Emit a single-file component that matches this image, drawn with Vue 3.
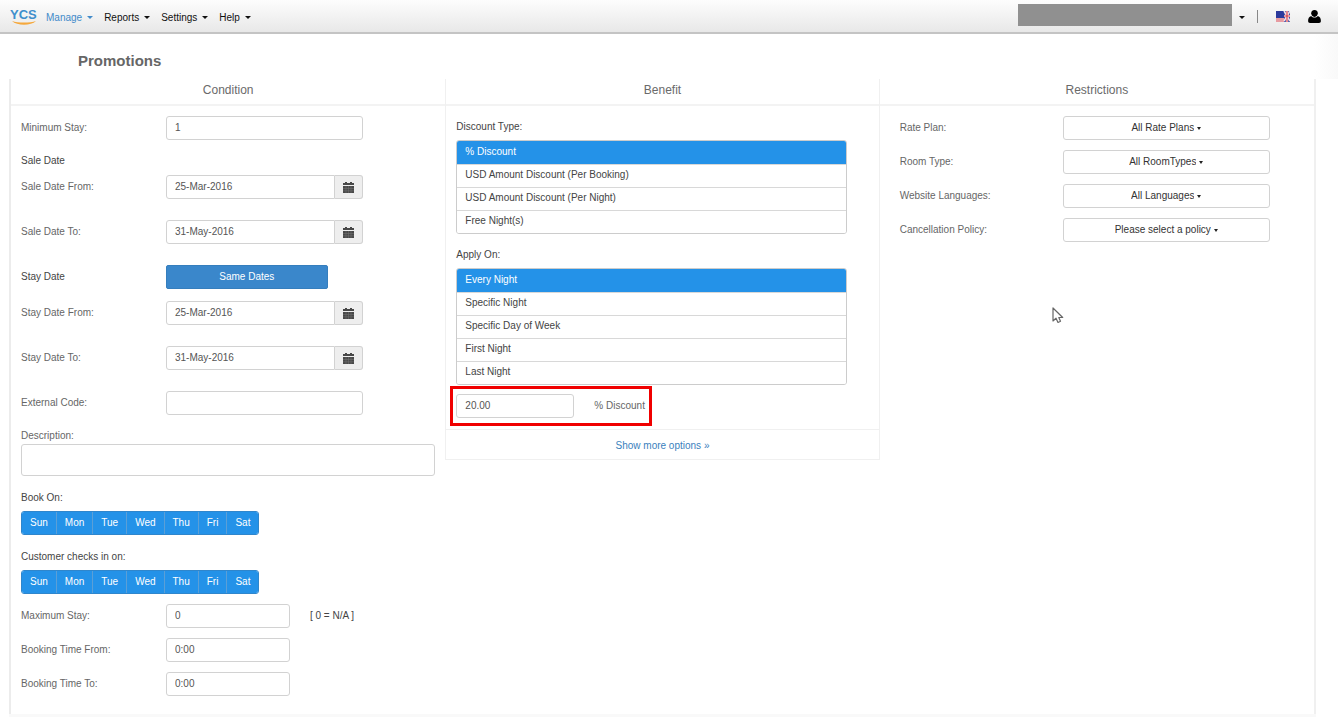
<script setup>
import { ref } from 'vue'

const menus = [
  { name: 'Manage', active: true },
  { name: 'Reports', active: false },
  { name: 'Settings', active: false },
  { name: 'Help', active: false },
]

const days = ['Sun', 'Mon', 'Tue', 'Wed', 'Thu', 'Fri', 'Sat']
const bookOn = ref([...days])
const checkInOn = ref([...days])

function toggle(list, day) {
  const i = list.indexOf(day)
  if (i < 0) list.push(day)
  else list.splice(i, 1)
}

const minimumStay = ref('1')
const saleFrom = ref('25-Mar-2016')
const saleTo = ref('31-May-2016')
const stayFrom = ref('25-Mar-2016')
const stayTo = ref('31-May-2016')
const externalCode = ref('')
const description = ref('')
const maximumStay = ref('0')
const timeFrom = ref('0:00')
const timeTo = ref('0:00')
const discount = ref('20.00')

function useSameDates() {
  stayFrom.value = saleFrom.value
  stayTo.value = saleTo.value
}

const discountTypes = [
  '% Discount',
  'USD Amount Discount (Per Booking)',
  'USD Amount Discount (Per Night)',
  'Free Night(s)',
]
const discountType = ref(discountTypes[0])

const nights = ['Every Night', 'Specific Night', 'Specific Day of Week', 'First Night', 'Last Night']
const applyOn = ref(nights[0])

const restrictions = [
  { id: 'rate-plan', label: 'Rate Plan:', value: 'All Rate Plans' },
  { id: 'room-type', label: 'Room Type:', value: 'All RoomTypes' },
  { id: 'languages', label: 'Website Languages:', value: 'All Languages' },
  { id: 'policy', label: 'Cancellation Policy:', value: 'Please select a policy' },
]

const calendarPath =
  'M0 1h2V0h2v1h3V0h2v1h2v2H0zM0 4h11v7H0z'
</script>

<template>
  <div class="page">
    <header class="topbar">
      <a class="logo" href="#" aria-label="YCS home">
        <span class="logo-text">YCS</span>
        <svg class="swoosh" viewBox="0 0 27 4" aria-hidden="true">
          <path d="M2 0C8 2 20 2 26 0C21 5 7 5 2 0z" fill="#f5a83c" />
        </svg>
      </a>
      <nav class="menu">
        <button
          v-for="m in menus"
          :key="m.name"
          type="button"
          class="menu-item"
          :class="{ active: m.active }"
        >
          {{ m.name }}<span class="caret"></span>
        </button>
      </nav>
      <div class="account">
        <span class="masked"></span>
        <button type="button" class="account-toggle" aria-label="Switch property"><span class="caret"></span></button>
        <span class="separator"></span>
        <button type="button" class="icon-button flag-button" aria-label="Language">
          <svg width="14" height="11" viewBox="0 0 14 11">
            <rect width="14" height="11" fill="#f6e6e8" />
            <path d="M0 8h14M0 10h14" stroke="#d8505a" stroke-width="1" />
            <rect width="8" height="7" fill="#2c3a9c" />
            <rect x="8" width="6" height="11" fill="#3f50a8" />
            <path d="M8 0l6 10M14 0L8 10" stroke="#f6dfe3" stroke-width="1.500" />
            <path d="M11 0v11M8 5h6" stroke="#fff" stroke-width="2.200" />
            <path d="M11 0v11M8 5h6" stroke="#d23440" stroke-width="1.200" />
          </svg>
        </button>
        <button type="button" class="icon-button" aria-label="Profile">
          <svg width="13" height="13" viewBox="0 0 13 13">
            <path d="M6.500 0C8.700 0 9.900 1.500 9.800 3.300C9.700 5 8.600 6.900 6.500 6.900S3.300 5 3.200 3.300C3.100 1.500 4.300 0 6.500 0z" />
            <path d="M3.200 6C4.800 8.100 8.200 8.100 9.800 6C12 6.600 12.900 8.500 12.900 11C12.900 12.300 12.200 13 11 13H2C0.800 13 0.100 12.300 0.100 11C0.100 8.500 1 6.600 3.200 6z" />
          </svg>
        </button>
      </div>
    </header>

    <div class="title-bar"><h1>Promotions</h1></div>

    <main class="panel">
      <section class="column">
        <h2>Condition</h2>
        <div class="body">
          <div class="row">
            <label for="min-stay">Minimum Stay:</label>
            <input id="min-stay" v-model="minimumStay" class="field" type="text" />
          </div>
          <h3 class="section">Sale Date</h3>
          <div class="row after-heading">
            <label for="sale-from">Sale Date From:</label>
            <div class="date">
              <input id="sale-from" v-model="saleFrom" type="text" />
              <button type="button" aria-label="Pick sale start date">
                <svg width="11" height="11" viewBox="0 0 11 11">
                  <path :d="calendarPath" />
                  <path class="grid-line" d="M0 6.500h11M0 8.800h11M3 4v7M5.500 4v7M8 4v7" />
                </svg>
              </button>
            </div>
          </div>
          <div class="row spaced">
            <label for="sale-to">Sale Date To:</label>
            <div class="date">
              <input id="sale-to" v-model="saleTo" type="text" />
              <button type="button" aria-label="Pick sale end date">
                <svg width="11" height="11" viewBox="0 0 11 11">
                  <path :d="calendarPath" />
                  <path class="grid-line" d="M0 6.500h11M0 8.800h11M3 4v7M5.500 4v7M8 4v7" />
                </svg>
              </button>
            </div>
          </div>
          <div class="row spaced">
            <h3>Stay Date</h3>
            <button type="button" class="primary" @click="useSameDates">Same Dates</button>
          </div>
          <div class="row after-button">
            <label for="stay-from">Stay Date From:</label>
            <div class="date">
              <input id="stay-from" v-model="stayFrom" type="text" />
              <button type="button" aria-label="Pick stay start date">
                <svg width="11" height="11" viewBox="0 0 11 11">
                  <path :d="calendarPath" />
                  <path class="grid-line" d="M0 6.500h11M0 8.800h11M3 4v7M5.500 4v7M8 4v7" />
                </svg>
              </button>
            </div>
          </div>
          <div class="row spaced">
            <label for="stay-to">Stay Date To:</label>
            <div class="date">
              <input id="stay-to" v-model="stayTo" type="text" />
              <button type="button" aria-label="Pick stay end date">
                <svg width="11" height="11" viewBox="0 0 11 11">
                  <path :d="calendarPath" />
                  <path class="grid-line" d="M0 6.500h11M0 8.800h11M3 4v7M5.500 4v7M8 4v7" />
                </svg>
              </button>
            </div>
          </div>
          <div class="row spaced">
            <label for="external">External Code:</label>
            <input id="external" v-model="externalCode" class="field" type="text" />
          </div>
          <div class="stack">
            <label for="description">Description:</label>
            <textarea id="description" v-model="description" rows="1"></textarea>
          </div>
          <h3 class="day-heading">Book On:</h3>
          <div class="days" role="group" aria-label="Book on">
            <button
              v-for="d in days"
              :key="d"
              type="button"
              :class="{ on: bookOn.includes(d) }"
              :aria-pressed="bookOn.includes(d)"
              @click="toggle(bookOn, d)"
            >{{ d }}</button>
          </div>
          <h3 class="day-heading">Customer checks in on:</h3>
          <div class="days" role="group" aria-label="Customer checks in on">
            <button
              v-for="d in days"
              :key="d"
              type="button"
              :class="{ on: checkInOn.includes(d) }"
              :aria-pressed="checkInOn.includes(d)"
              @click="toggle(checkInOn, d)"
            >{{ d }}</button>
          </div>
          <div class="row close">
            <label for="max-stay">Maximum Stay:</label>
            <div class="with-note">
              <input id="max-stay" v-model="maximumStay" class="short" type="text" />
              <span>[ 0 = N/A ]</span>
            </div>
          </div>
          <div class="row close">
            <label for="time-from">Booking Time From:</label>
            <input id="time-from" v-model="timeFrom" class="short" type="text" />
          </div>
          <div class="row close">
            <label for="time-to">Booking Time To:</label>
            <input id="time-to" v-model="timeTo" class="short" type="text" />
          </div>
        </div>
      </section>

      <section class="column benefit">
        <h2>Benefit</h2>
        <div class="body benefit-body">
          <h3>Discount Type:</h3>
          <div class="options" role="group" aria-label="Discount type">
            <button
              v-for="t in discountTypes"
              :key="t"
              type="button"
              :class="{ on: t === discountType }"
              :aria-pressed="t === discountType"
              @click="discountType = t"
            >{{ t }}</button>
          </div>
          <h3 class="section">Apply On:</h3>
          <div class="options" role="group" aria-label="Apply on">
            <button
              v-for="n in nights"
              :key="n"
              type="button"
              :class="{ on: n === applyOn }"
              :aria-pressed="n === applyOn"
              @click="applyOn = n"
            >{{ n }}</button>
          </div>
          <div class="highlight">
            <input id="discount" v-model="discount" type="text" />
            <label for="discount">% Discount</label>
          </div>
        </div>
        <div class="more"><a href="#">Show more options »</a></div>
      </section>

      <section class="column restrictions">
        <h2>Restrictions</h2>
        <div class="body restriction-body">
          <div v-for="r in restrictions" :key="r.id" class="row restriction">
            <label :for="r.id">{{ r.label }}</label>
            <div class="dropdown">
              <select :id="r.id"><option>{{ r.value }}</option></select>
              <span class="caret small"></span>
            </div>
          </div>
        </div>
        <svg class="pointer" width="12" height="17" viewBox="0 0 12 17" aria-hidden="true">
          <path d="M1 1v13l3-2.800L6 15.500l2.500-1.200L6.800 10.500h3.900z" fill="#fff" stroke="#666" stroke-width="1.200" stroke-linejoin="round" />
        </svg>
      </section>
    </main>
  </div>
</template>

<style>
body {
  margin: 0;
  background: #fff;
}
</style>

<style scoped>
* {
  box-sizing: border-box;
}

.page {
  display: flex;
  flex-direction: column;
  min-height: 100vh;
  font-family: "Liberation Sans", Arial, sans-serif;
  font-size: 10px;
  line-height: 16px;
  color: #444;
}

button,
input,
textarea,
select {
  font: inherit;
  color: inherit;
  margin: 0;
}

button {
  cursor: pointer;
}

h1,
h2,
h3 {
  margin: 0;
  font-weight: normal;
}

h3 {
  font-size: 10px;
}

.topbar {
  display: flex;
  align-items: center;
  height: 34px;
  padding: 0 17px 0 10px;
  background: linear-gradient(#fdfdfd, #e8e8e8);
  border-bottom: 2px solid #c4c4c4;
}

.logo {
  display: flex;
  flex-direction: column;
  width: 28px;
  padding-top: 2px;
  color: #3f8fcc;
  text-decoration: none;
}

.logo-text {
  font-size: 13px;
  line-height: 12px;
  font-weight: bold;
}

.swoosh {
  width: 27px;
  height: 4px;
}

.menu {
  display: flex;
  gap: 11px;
  margin-left: 8px;
  padding-top: 3px;
}

.menu-item {
  display: flex;
  align-items: center;
  gap: 5px;
  padding: 0;
  border: 0;
  background: none;
  color: #111;
}

.menu-item.active {
  color: #428bca;
}

.caret {
  border: 3px solid transparent;
  border-top-color: currentColor;
  border-bottom: 0;
}

.caret.small {
  border-width: 2px;
  border-top-width: 3px;
  border-bottom: 0;
  color: #222;
}

.account {
  display: flex;
  align-items: center;
  height: 100%;
  margin-left: auto;
}

.masked {
  width: 214px;
  height: 22px;
  margin-bottom: 2px;
  background: #909090;
}

.account-toggle {
  display: flex;
  padding: 8px 6px 6px 7px;
  border: 0;
  background: none;
  color: #111;
}

.separator {
  width: 1px;
  height: 13px;
  margin: 0 18px 0 6px;
  background: #888;
}

.icon-button {
  display: flex;
  padding: 0;
  border: 0;
  background: none;
}

.flag-button {
  margin-right: 18px;
}

.title-bar {
  height: 45px;
  padding: 18px 78px 0;
  background: linear-gradient(to left, #f9f9f9, #fff 24px);
}

h1 {
  font-size: 15px;
  line-height: 18px;
  font-weight: bold;
  color: #666;
}

.panel {
  flex: 1;
  display: grid;
  grid-template-columns: repeat(3, minmax(0, 1fr));
  align-items: start;
  margin: 0 22px 3px 9px;
  border-left: 2px solid #ececec;
  border-right: 2px solid #f0f0f0;
  box-shadow: 0 3px 0 #f9f9f9;
}

h2 {
  height: 27px;
  border-bottom: 2px solid #f3f3f3;
  font-size: 12px;
  line-height: 23px;
  text-align: center;
  color: #6a6a6a;
}

.body {
  padding: 10px;
}

.row {
  display: grid;
  grid-template-columns: 35% 1fr;
  align-items: center;
}

.row label,
.stack label {
  color: #666;
}

.section {
  margin-top: 13px;
}

.day-heading {
  margin-top: 14px;
}

.after-heading {
  margin-top: 6px;
}

.after-button {
  margin-top: 12px;
}

.spaced {
  margin-top: 21px;
}

.close {
  margin-top: 10px;
}

input {
  height: 24px;
  padding: 0 8px 2px;
  border: 1px solid #d2d2d2;
  border-radius: 3px;
  background: #fff;
  color: #555;
  min-width: 0;
}

.field {
  width: 73%;
}

.date,
.primary {
  height: 24px;
}

.date {
  display: flex;
  width: 73%;
}

.date input {
  flex: 1;
  border-radius: 3px 0 0 3px;
}

.date button {
  display: flex;
  align-items: center;
  justify-content: center;
  width: 28px;
  padding: 0;
  border: 1px solid #d2d2d2;
  border-left: 0;
  border-radius: 0 3px 3px 0;
  background: #eee;
}

.date svg {
  fill: #484848;
}

.grid-line {
  stroke: #777;
  stroke-width: 0.5;
}

.primary {
  width: 60%;
  padding: 0;
  border: 1px solid #357ebd;
  border-radius: 2px;
  background: #3a87cb;
  color: #fff;
}

.stack {
  display: flex;
  flex-direction: column;
  margin-top: 13px;
}

textarea {
  height: 32px;
  padding: 6px 8px;
  border: 1px solid #d2d2d2;
  border-radius: 3px;
  resize: none;
}

.days {
  display: flex;
  width: fit-content;
  margin-top: 5px;
  border: 1px solid #2f86cc;
  border-radius: 3px;
  overflow: hidden;
}

.days button {
  height: 22px;
  padding: 0 8px;
  border: 0;
  background: #fff;
}

.days button + button {
  border-left: 1px solid #5b9fd6;
}

.days .on,
.options .on {
  background: #2492e8;
  color: #fff;
}

.short {
  width: 46%;
}

.with-note {
  display: flex;
  align-items: center;
  gap: 20px;
}

.benefit {
  border: 1px solid #f0f0f0;
  border-top: 0;
}

.benefit-body {
  padding: 13px 32px 3px 10px;
}

.options {
  display: flex;
  flex-direction: column;
  margin-top: 5px;
  border: 1px solid #ccc;
  border-radius: 3px;
  overflow: hidden;
}

.options button {
  height: 23px;
  padding: 0 8px 2px;
  border: 0;
  background: #fff;
  text-align: left;
}

.options button + button {
  border-top: 1px solid #d8d8d8;
}

.highlight {
  display: flex;
  align-items: center;
  gap: 20px;
  width: fit-content;
  margin: 1px 0 0 -6px;
  padding: 5px 4px 5px 3px;
  border: 3px solid #f00000;
}

.highlight input {
  width: 118px;
}

.highlight label {
  color: #666;
}

.more {
  padding: 8px 0 5px;
  border-top: 1px solid #f0f0f0;
  text-align: center;
}

.more a {
  color: #3a7fbd;
  text-decoration: none;
}

.restrictions {
  position: relative;
}

.restriction-body {
  display: flex;
  flex-direction: column;
  gap: 10px;
  padding: 10px 44px 10px 20px;
}

.restriction {
  grid-template-columns: 44% 1fr;
}

.dropdown {
  display: flex;
  align-items: center;
  justify-content: center;
  gap: 3px;
  height: 24px;
  border: 1px solid #d2d2d2;
  border-radius: 3px;
}

.dropdown select {
  appearance: none;
  field-sizing: content;
  padding: 0;
  border: 0;
  background: none;
  color: #333;
}

.pointer {
  position: absolute;
  left: 172px;
  top: 228px;
}
</style>
